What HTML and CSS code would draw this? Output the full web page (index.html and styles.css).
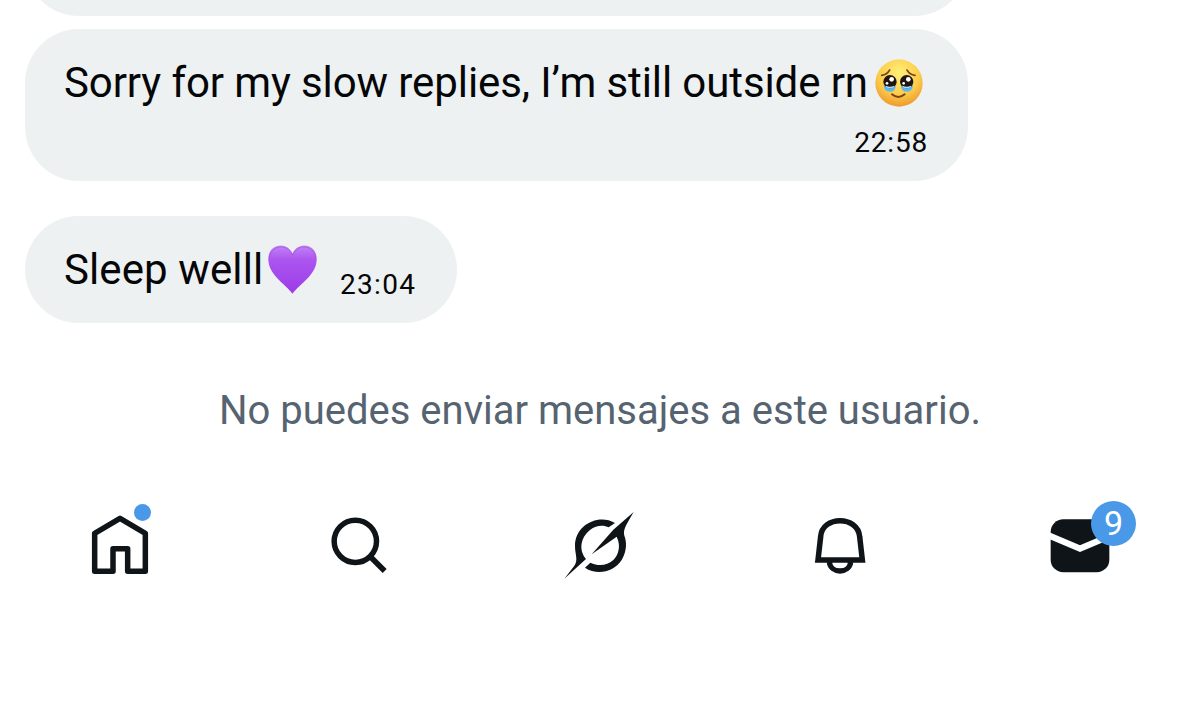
FILE: index.html
```html
<!DOCTYPE html>
<html lang="es">
<head>
    <meta charset="UTF-8">
    <meta name="viewport" content="width=device-width, initial-scale=1.0">
    <title>Mensajes</title>
    <link rel="stylesheet" href="styles.css">
</head>

<body>
    <div class="chat">
        <div class="bubble previous"></div>

        <div class="bubble long">
            <div class="line">
                <span class="text">Sorry for my slow replies, I’m still outside rn</span>
                <svg class="emoji face" viewBox="0 0 144 144">
                    <defs>
                        <radialGradient id="skin" cx="50%" cy="30%" r="72%">
                            <stop offset="0" stop-color="#fff07a"/>
                            <stop offset="0.6" stop-color="#fdcc4b"/>
                            <stop offset="1" stop-color="#ec962c"/>
                        </radialGradient>
                    </defs>
                    <circle cx="72" cy="72" r="71" fill="url(#skin)"/>
                    <path d="M20 49Q36 47 44 33M120 49Q104 47 96 33" fill="none" stroke="#7a4515" stroke-width="5" stroke-linecap="round"/>
                    <path d="M26 78Q44 92 62 80Q62 98 44 98Q27 98 26 78ZM114 78Q96 92 78 80Q78 98 96 98Q113 98 114 78Z" fill="#5db9ed"/>
                    <circle cx="45" cy="68" r="20" fill="#20150f"/>
                    <circle cx="95" cy="68" r="20" fill="#20150f"/>
                    <circle cx="50" cy="61" r="7" fill="#fff"/>
                    <circle cx="100" cy="61" r="7" fill="#fff"/>
                    <circle cx="36" cy="73" r="4" fill="#fff"/>
                    <circle cx="86" cy="73" r="4" fill="#fff"/>
                    <path d="M32 82Q45 89 58 82M82 82Q95 89 108 82" fill="none" stroke="#a9dcf7" stroke-width="4"/>
                    <path d="M51 106Q70 122 89 106" fill="none" stroke="#7a4515" stroke-width="6" stroke-linecap="round"/>
                </svg>
            </div>
            <div class="time">22:58</div>
        </div>

        <div class="bubble short">
            <span class="text">Sleep welll</span>
            <svg class="emoji heart" viewBox="0 0 150 150">
                <defs>
                    <linearGradient id="purple" x1="0" y1="0" x2="0" y2="1">
                        <stop offset="0" stop-color="#c184f5"/>
                        <stop offset="0.3" stop-color="#ac55ef"/>
                        <stop offset="1" stop-color="#9b3ce8"/>
                    </linearGradient>
                </defs>
                <path d="M75 149C52 118 1 92 1 43C1 -6 60 -12 75 27C90 -12 149 -6 149 43C149 92 98 118 75 149Z" fill="url(#purple)"/>
                <path d="M4 45C4 0 60 -8 75 31C90 -8 146 0 146 45" fill="none" stroke="#9d50d8" stroke-width="3" opacity="0.6"/>
            </svg>
            <span class="time">23:04</span>
        </div>
    </div>

    <div class="notice"><span>No puedes enviar mensajes a este usuario.</span></div>

    <div class="nav">
        <div class="item">
            <svg class="icon" viewBox="0 0 300 270">
                <path d="M74 214V100L150 55L226 100V214H173V146H129V214Z" fill="none" stroke="#0f1419" stroke-width="16.5" stroke-linejoin="round"/>
            </svg>
            <div class="dot"></div>
        </div>
        <div class="item">
            <svg class="icon search" viewBox="0 0 300 270">
                <circle cx="139" cy="121" r="63.5" fill="none" stroke="#0f1419" stroke-width="16.5"/>
                <path d="M182 165L227 210" stroke="#0f1419" stroke-width="16.5"/>
            </svg>
        </div>
        <div class="item">
            <svg class="icon" viewBox="0 0 300 270">
                <path d="M195 69C145 40 75 75 75 138C75 165 86 180 72 199L43 236L108 177C85 150 92 112 120 90C138 76 160 74 176 82Z" fill="#0f1419"/>
                <path d="M105 203C140 226 190 218 215 180C232 150 230 125 223 107C218 88 230 73 251 36L190 89L125 163L200 110C214 138 205 165 190 180C170 198 145 199 121 188Z" fill="#0f1419"/>
            </svg>
        </div>
        <div class="item">
            <svg class="icon" viewBox="0 0 300 270">
                <path d="M84 180L92 110C96 46 204 46 209 110L217 180Z" fill="none" stroke="#0f1419" stroke-width="16.5"/>
                <path d="M118 186C122 222 178 222 182 186" fill="none" stroke="#0f1419" stroke-width="16"/>
            </svg>
        </div>
        <div class="item">
            <svg class="icon" viewBox="0 0 300 270">
                <rect x="62" y="58" width="176" height="159" rx="38" fill="#0f1419"/>
                <path d="M56 106L150 146L244 106" fill="none" stroke="#fff" stroke-width="19"/>
            </svg>
            <div class="badge">9</div>
        </div>
    </div>
</body>
</html>
```

FILE: styles.css
```css
body {
    margin: 0;
    height: 710px;
    overflow: hidden;
    background-color: white;
    font-family: Roboto, "Liberation Sans", Arial, sans-serif;
    color: #050607;
}

/* mensajes */
.chat {
    display: flex;
    flex-direction: column;
    align-items: flex-start;
    padding-left: 25px;
}

.bubble {
    box-sizing: border-box;
    background-color: #edf1f2;
    border-radius: 54px;
    white-space: nowrap;
}

.previous {
    width: 943px;
    height: 108px;
    margin-top: -92px;
}

.long {
    width: 943px;
    height: 152px;
    margin-top: 13px;
    padding: 27px 40px 0 39px;
}

.short {
    display: flex;
    align-items: center;
    width: 432px;
    height: 107px;
    margin-top: 35px;
    padding-left: 39px;
}

.line {
    display: flex;
    align-items: center;
    height: 54px;
}

.text {
    font-size: 42px;
    line-height: 54px;
}

.long .text {
    width: 811px;
    letter-spacing: -0.1px;
}

.short .text {
    width: 204px;
    letter-spacing: 0.1px;
}

.emoji {
    flex: none;
    display: block;
}

.face {
    width: 48px;
    height: 48px;
}

.heart {
    width: 49px;
    height: 49px;
}

.time {
    font-size: 28px;
    line-height: 32px;
    letter-spacing: 0.8px;
}

.long .time {
    margin-top: 17px;
    text-align: right;
}

.short .time {
    margin: 30px 0 0 23px;
    letter-spacing: 1.3px;
}

.notice {
    margin-top: 61px;
    height: 54px;
    line-height: 54px;
    text-align: center;
    font-size: 40px;
    white-space: nowrap;
    color: #566370;
}

/* barra inferior */
.nav {
    display: flex;
    margin-top: 62px;
}

.item {
    position: relative;
    display: flex;
    justify-content: center;
    width: 240px;
}

.icon {
    width: 100px;
    height: 90px;
}

.search {
    margin: 1px 2px 0 0;
}

.dot {
    position: absolute;
    left: 134px;
    top: 4px;
    width: 17px;
    height: 17px;
    border-radius: 50%;
    background-color: #4a99e9;
}

.badge {
    position: absolute;
    left: 131px;
    top: 1px;
    width: 45px;
    height: 45px;
    border-radius: 50%;
    background-color: #4a99e9;
    color: white;
    font-size: 34px;
    line-height: 45px;
    text-align: center;
}
```
